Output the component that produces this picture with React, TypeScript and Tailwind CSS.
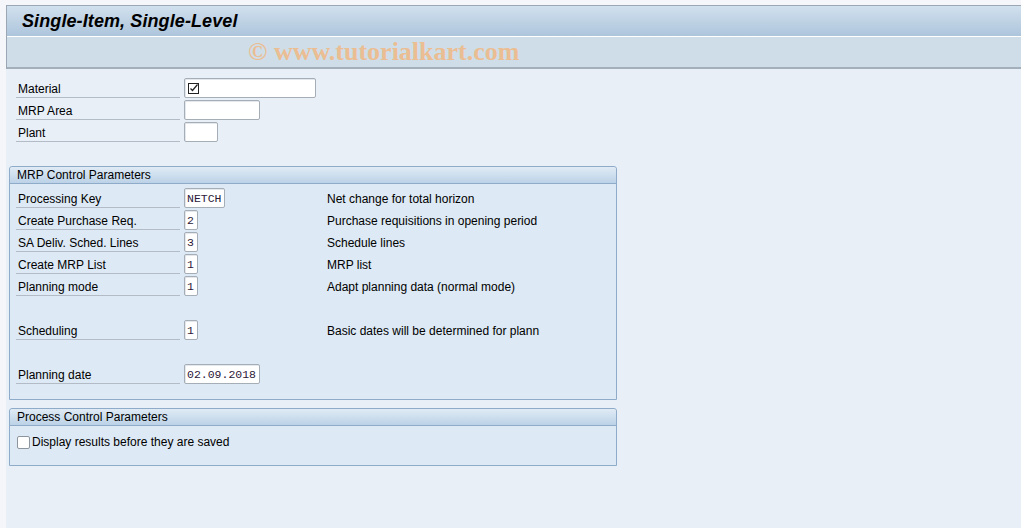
import React from 'react';

const sans = "font-['Liberation_Sans','Noto_Sans',sans-serif]";
const mono = "font-['Liberation_Mono','DejaVu_Sans_Mono',monospace]";

function Field({ width, value, check }: { width: string; value?: string; check?: boolean }) {
  return (
    <div
      className={`h-[20px] ${width} bg-white border border-[#a5adb6] rounded-[2px] flex items-center pl-[2px] pt-[1px] text-[11.5px] text-[#2b1838] ${mono} shadow-[inset_1px_1px_0_#e4e8ec]`}
    >
      {check && (
        <svg width="11" height="11" viewBox="0 0 11 11" className="ml-[1px]">
          <rect x="0.5" y="0.5" width="10" height="10" fill="none" stroke="#222" strokeWidth="1" />
          <path d="M2.5 5.5 L4.5 7.5 L9.5 1.5" fill="none" stroke="#222" strokeWidth="1.2" />
        </svg>
      )}
      {value}
    </div>
  );
}

function Row({ label, width, value, check, desc }: { label: string; width: string; value?: string; check?: boolean; desc?: string }) {
  return (
    <div className="h-[20px] flex items-center">
      <div className="w-[164px] h-[20px] flex items-center pl-[2px] pt-[2px] border-b border-[#b3bcc6] text-[12px] text-black">
        {label}
      </div>
      <div className="w-[4px]" />
      <div className="w-[143px] flex">
        <Field width={width} value={value} check={check} />
      </div>
      {desc && <div className="text-[12px] text-black pt-[1px]">{desc}</div>}
    </div>
  );
}

function Group({ title, children, className }: { title: string; children: React.ReactNode; className?: string }) {
  return (
    <div className={`w-[608px] ml-[3px] border border-[#8eabc9] rounded-t-[3px] bg-[#dde9f4] ${className ?? ''}`}>
      <div className="h-[17px] bg-gradient-to-b from-[#e0ebf5] to-[#bcd2e7] border-b border-[#8eabc9] rounded-t-[3px] pl-[7px] text-[12px] text-black leading-[17px]">
        {title}
      </div>
      {children}
    </div>
  );
}

export default function App() {
  return (
    <div className={`w-[1021px] h-[528px] bg-[#f4f6f9] pt-[5px] pl-[6px] flex flex-col overflow-hidden ${sans}`}>
      <div className="border-t border-l border-[#9ba7b5]">
        <div className="h-[30px] bg-gradient-to-b from-[#d1e0ed] to-[#adc5dc] flex items-center pl-[15px]">
          <span className="text-[18px] font-bold italic text-black tracking-[0.1px]">Single-Item, Single-Level</span>
        </div>
        <div className="h-px bg-white" />
        <div className="h-[32px] bg-[#cfdde8] border-b-2 border-[#a3afbb] flex items-center pl-[241px]">
          <span className="text-[26px] font-bold text-[#ebbd93] font-['Liberation_Serif',serif] leading-none">
            © www.tutorialkart.com
          </span>
        </div>
      </div>
      <div className="flex-1 bg-[#e8eff7] pt-[9px]">
        <div className="flex flex-col gap-[2px] pl-[10px]">
          <Row label="Material" width="w-[132px]" check />
          <Row label="MRP Area" width="w-[76px]" />
          <Row label="Plant" width="w-[34px]" />
        </div>

        <Group title="MRP Control Parameters" className="mt-[24px] h-[234px]">
          <div className="flex flex-col gap-[2px] pl-[6px] pt-[4px] pr-[8px]">
            <Row label="Processing Key" width="w-[41px]" value="NETCH" desc="Net change for total horizon" />
            <Row label="Create Purchase Req." width="w-[14px]" value="2" desc="Purchase requisitions in opening period" />
            <Row label="SA Deliv. Sched. Lines" width="w-[14px]" value="3" desc="Schedule lines" />
            <Row label="Create MRP List" width="w-[14px]" value="1" desc="MRP list" />
            <Row label="Planning mode" width="w-[14px]" value="1" desc="Adapt planning data (normal mode)" />
            <div className="h-[20px]" />
            <Row label="Scheduling" width="w-[14px]" value="1" desc="Basic dates will be determined for plann" />
            <div className="h-[20px]" />
            <Row label="Planning date" width="w-[76px]" value="02.09.2018" />
          </div>
        </Group>

        <Group title="Process Control Parameters" className="mt-[8px] h-[58px]">
          <div className="flex items-center pl-[7px] pt-[7px] text-[12px] text-black">
            <div className="w-[13px] h-[13px] bg-white border border-[#8d959e] rounded-[2px]" />
            <span className="ml-[2px]">Display results before they are saved</span>
          </div>
        </Group>
      </div>
    </div>
  );
}
